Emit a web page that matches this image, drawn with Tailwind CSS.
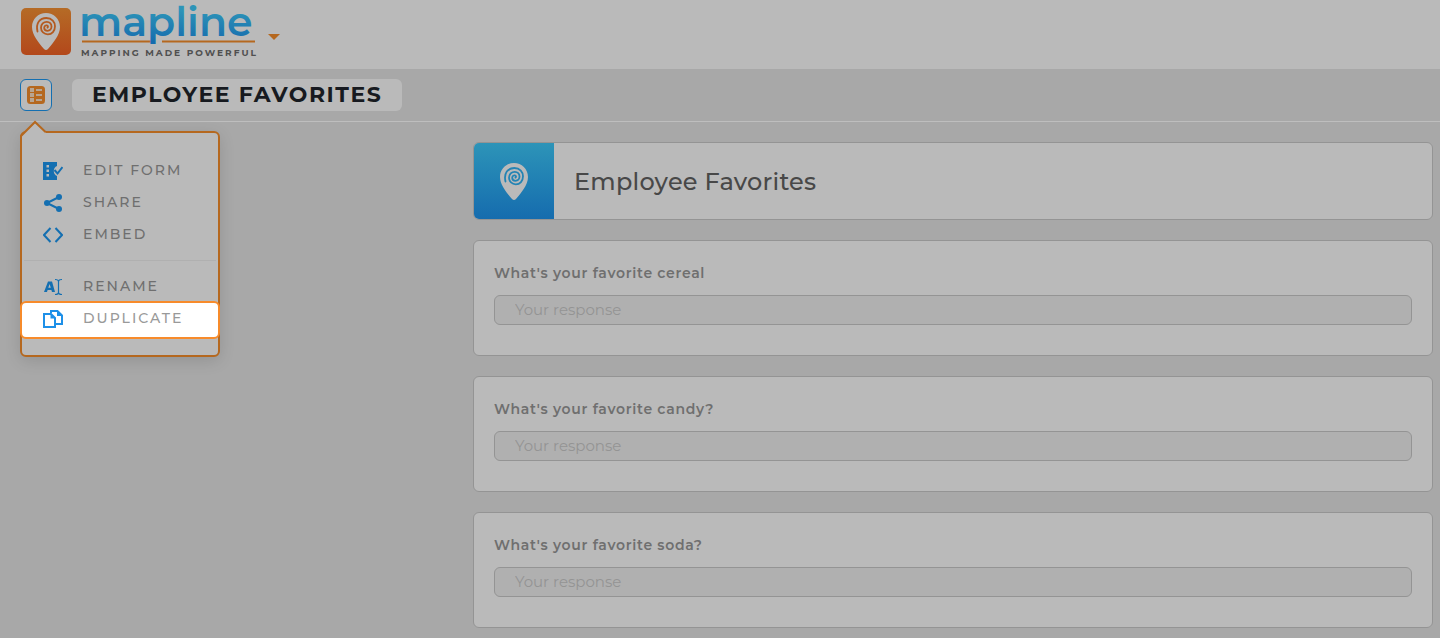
<!DOCTYPE html>
<html lang="en">
<head>
    <meta charset="UTF-8">
    <meta name="viewport" content="width=device-width, initial-scale=1.0">
    <title>Employee Favorites - Mapline</title>
    <script src="https://cdn.jsdelivr.net/npm/@tailwindcss/browser@4"></script>
</head>
<body class="min-h-screen bg-[#a8a8a8] font-['Montserrat','Inter',sans-serif] text-[#6f6f6f]">
    <!-- Brand header -->
    <header class="flex h-[69px] items-start bg-[#bababa] pl-5">
        <a href="#" aria-label="Mapline home" class="flex gap-2">
            <svg class="h-14 w-[52px]" viewBox="0 0 52 56">
                <defs>
                    <linearGradient id="orange" x1="0" y1="0" x2="0" y2="1">
                        <stop offset="0" stop-color="#b56b26"/>
                        <stop offset="1" stop-color="#b3481b"/>
                    </linearGradient>
                </defs>
                <rect x="1" y="8" width="50" height="47" rx="5" fill="url(#orange)"/>
                <g transform="translate(12 13)">
                    <path d="M14 0C6.300 0 0 6 0 14c0 8 7 16 12 22q2 2 4 0c5-6 12-14 12-22C28 6 21.700 0 14 0Z" fill="#bababa"/>
                    <path d="M5.500 18.500C3.500 10 8 5 14.300 5 20 5 23 9 23 13.300 23 18 20 21.300 15.800 21.300 12 21.300 9 18.500 9 14.800 9 11.300 11.600 8.800 14.800 8.800 17.600 8.800 19.500 11 19.500 13.600 19.500 16 17.800 17.800 15.500 17.800 13.600 17.800 12.200 16.500 12.200 14.800 12.200 13.200 13.500 12.200 14.800 12.400 16 12.600 16.400 13.800 15.500 14.600" fill="none" stroke="#b45a20" stroke-width="1.800" stroke-linecap="round"/>
                </g>
            </svg>
            <svg class="h-[60px] w-[180px]" viewBox="0 0 180 60">
                <defs>
                    <linearGradient id="word" gradientUnits="userSpaceOnUse" x1="0" y1="10" x2="0" y2="42">
                        <stop offset="0" stop-color="#2d94b8"/>
                        <stop offset="1" stop-color="#166cae"/>
                    </linearGradient>
                </defs>
                <path d="M2 41.500h69M82 41.500h93" stroke="#b5681f" stroke-width="2"/>
                <text x="-1" y="36" font-size="41" fill="url(#word)" class="font-semibold">mapline</text>
                <text x="1" y="56" font-size="9" fill="#505050" class="font-bold tracking-[2px]">MAPPING MADE POWERFUL</text>
            </svg>
        </a>
        <button type="button" aria-label="Open workspace menu" class="ml-2 mt-[34px]">
            <svg class="h-1.5 w-3" viewBox="0 0 12 6"><path d="M0 0h12L6 6Z" fill="#b5681f"/></svg>
        </button>
    </header>

    <!-- Title bar -->
    <div class="relative flex h-[53px] items-center gap-5 border-b border-[#bebebe] px-5">
        <button type="button" aria-label="Form menu" class="flex size-8 items-center justify-center rounded-md border border-[#146fb1] bg-[#bababa]">
            <svg class="size-[18px]" viewBox="0 0 18 18">
                <rect width="18" height="18" rx="3.500" fill="#b5681f"/>
                <path d="M3 2h4v4H3zM3 7h4v4H3zM3 12h4v4H3zM9 3h6v2H9zM9 8h6v2H9zM9 13h6v2H9z" fill="#bababa" fill-opacity=".75"/>
            </svg>
        </button>
        <h1 class="rounded-md bg-[#bababa] px-5 text-[22px] leading-8 font-bold tracking-[0.07em] text-[#171a20]">EMPLOYEE FAVORITES</h1>

        <!-- Form menu -->
        <nav aria-label="Form actions" class="absolute top-[62px] left-5 z-10 w-[200px] rounded-md border-2 border-[#b5681f] bg-[#bababa] py-[21px] text-sm font-medium tracking-[2px] shadow-[0_4px_16px_rgba(0,0,0,0.12)]">
            <svg class="absolute -top-3.5 -left-0.5 h-[18px] w-7" viewBox="0 0 28 18">
                <path d="M2 18v-2L15 4l12 11v3Z" fill="#bababa"/>
                <path d="M1 18v-1L15 3l10.500 10" fill="none" stroke="#b5681f" stroke-width="2"/>
            </svg>
            <ul>
                <li>
                    <button type="button" class="flex h-8 w-full items-center gap-5 px-[21px]">
                        <svg class="size-5" viewBox="0 0 20 20">
                            <path d="M0 2h14v4a5.500 5.500 0 0 0 0 10v4H0Z" fill="#146fb1"/>
                            <path d="M3.500 5h2.500v2.500H3.500zM3.500 9.500h2.500V12H3.500zM3.500 14h2.500v2.500H3.500z" fill="#bababa"/>
                            <path d="m11.500 10 3 3.500L19.500 7" fill="none" stroke="#146fb1" stroke-width="2"/>
                        </svg>
                        EDIT FORM
                    </button>
                </li>
                <li>
                    <button type="button" class="flex h-8 w-full items-center gap-5 px-[21px]">
                        <svg class="size-5" viewBox="0 0 20 20" fill="#146fb1">
                            <path d="M16 5 4 11l12 6" fill="none" stroke="#146fb1" stroke-width="2"/>
                            <circle cx="16" cy="5" r="3"/><circle cx="4" cy="11" r="3"/><circle cx="16" cy="17" r="3"/>
                        </svg>
                        SHARE
                    </button>
                </li>
                <li>
                    <button type="button" class="flex h-8 w-full items-center gap-5 px-[21px]">
                        <svg class="size-5" viewBox="0 0 20 20" fill="none" stroke="#146fb1" stroke-width="2">
                            <path d="M7.500 4 1 11l6.500 7M12.500 4l6.500 7-6.500 7"/>
                        </svg>
                        EMBED
                    </button>
                </li>
                <li class="mx-0.5 mt-[10px] mb-[9px] h-px bg-[#b0b0b0]" role="separator"></li>
                <li>
                    <button type="button" class="flex h-8 w-full items-center gap-5 px-[21px]">
                        <svg class="size-5" viewBox="0 0 20 20">
                            <path fill-rule="evenodd" d="M1 16 5 5.500h4L12 16H9l-.6-2H4.600L4 16ZM5.300 11.800h2.500L6.600 8Z" fill="#146fb1"/>
                            <path d="M12 3.500q3.500 0 3.500 2 0-2 3.500-2M15.500 5v12M12 18.500q3.500 0 3.500-2 0 2 3.500 2" fill="none" stroke="#146fb1" stroke-width="1.200"/>
                        </svg>
                        RENAME
                    </button>
                </li>
                <li class="relative">
                    <span class="absolute -top-px -right-0.5 -bottom-[5px] -left-0.5 rounded-md border-2 border-[#f78b2b] bg-white"></span>
                    <button type="button" class="relative flex h-8 w-full items-center gap-5 px-[21px] text-[#999]">
                        <svg class="size-5" viewBox="0 0 20 20">
                            <path d="M8 5V3h6.500L19 7.500V16h-6" fill="none" stroke="#1e90e8" stroke-width="2"/>
                            <path d="M1 6h7l4 4v9H1Z" fill="#fff" stroke="#1e90e8" stroke-width="2"/>
                            <path d="M7.500 5.500V10.500H13ZM14 2.500V8h5.500Z" fill="#1e90e8"/>
                        </svg>
                        DUPLICATE
                    </button>
                </li>
            </ul>
        </nav>
    </div>

    <!-- Form preview -->
    <main class="ml-[473px] flex flex-col gap-5 py-5 pr-[7px]">
        <section class="flex h-[78px] overflow-hidden rounded-md border border-[#949494] bg-[#bababa]">
            <div class="flex w-20 items-center justify-center bg-linear-to-b from-[#2d94b8] to-[#166cae]">
                <svg class="h-[37px] w-7" viewBox="0 0 28 37">
                    <path d="M14 0C6.300 0 0 6 0 14c0 8 7 16 12 22q2 2 4 0c5-6 12-14 12-22C28 6 21.700 0 14 0Z" fill="#bababa"/>
                    <path d="M5.500 18.500C3.500 10 8 5 14.300 5 20 5 23 9 23 13.300 23 18 20 21.300 15.800 21.300 12 21.300 9 18.500 9 14.800 9 11.300 11.600 8.800 14.800 8.800 17.600 8.800 19.500 11 19.500 13.600 19.500 16 17.800 17.800 15.500 17.800 13.600 17.800 12.200 16.500 12.200 14.800 12.200 13.200 13.500 12.200 14.800 12.400 16 12.600 16.400 13.800 15.500 14.600" fill="none" stroke="#2484b4" stroke-width="1.800" stroke-linecap="round"/>
                </svg>
            </div>
            <h2 class="flex items-center px-5 pt-0.5 text-2xl font-medium tracking-[0.01em] text-[#484848]">Employee Favorites</h2>
        </section>

        <section class="rounded-md border border-[#949494] bg-[#bababa] px-5 pt-[22px] pb-[30px]">
            <label for="cereal" class="block text-sm leading-5 font-semibold tracking-wider">What's your favorite cereal</label>
            <input id="cereal" type="text" placeholder="Your response" class="mt-3 block h-[30px] w-full rounded-md border border-[#949494] bg-[#b0b0b0] px-5 pb-0.5 text-[15px] placeholder:text-[#949494]">
        </section>

        <section class="rounded-md border border-[#949494] bg-[#bababa] px-5 pt-[22px] pb-[30px]">
            <label for="candy" class="block text-sm leading-5 font-semibold tracking-wider">What's your favorite candy?</label>
            <input id="candy" type="text" placeholder="Your response" class="mt-3 block h-[30px] w-full rounded-md border border-[#949494] bg-[#b0b0b0] px-5 pb-0.5 text-[15px] placeholder:text-[#949494]">
        </section>

        <section class="rounded-md border border-[#949494] bg-[#bababa] px-5 pt-[22px] pb-[30px]">
            <label for="soda" class="block text-sm leading-5 font-semibold tracking-wider">What's your favorite soda?</label>
            <input id="soda" type="text" placeholder="Your response" class="mt-3 block h-[30px] w-full rounded-md border border-[#949494] bg-[#b0b0b0] px-5 pb-0.5 text-[15px] placeholder:text-[#949494]">
        </section>
    </main>
</body>
</html>
